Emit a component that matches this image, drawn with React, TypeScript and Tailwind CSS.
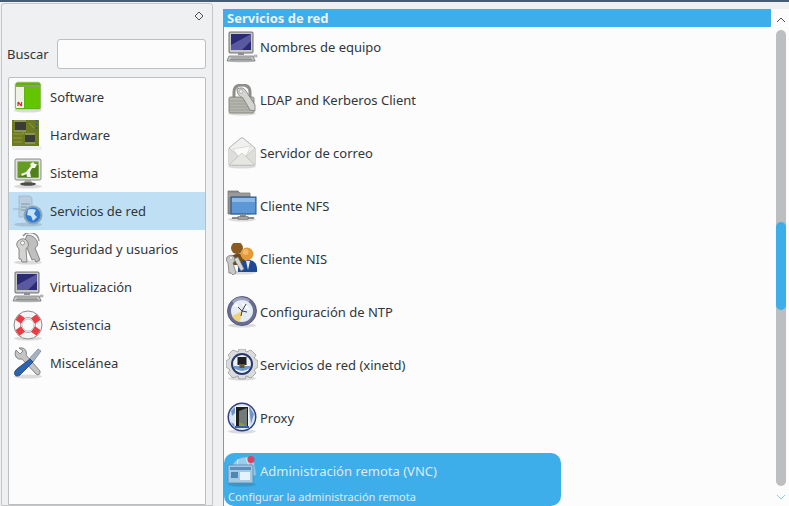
import type { ReactNode } from 'react'

function Icon({ children }: { children: ReactNode }) {
  return (
    <svg viewBox="0 0 32 32" className="w-8 h-8 shrink-0">
      <ellipse cx="16" cy="29.5" rx="14" ry="2" fill="#000" opacity="0.13" />
      {children}
    </svg>
  )
}

const SoftwareIcon = () => (
  <Icon>
    <path d="M3 3 L5 1 H27 L29 3 V27 Q29 28.500 27 28.500 H5 Q3 28.500 3 27 Z" fill="#5fb30c" stroke="#cfd6c6" strokeWidth="0.8" />
    <path d="M4 4 H28 V6 H4 Z" fill="#9a9a9a" opacity="0.7" />
    <path d="M4 6 H12 V27 H4 Z" fill="#eef3e6" />
    <path d="M13 6 H28 V27 H13 Z" fill="#64c400" />
    <path d="M6 21 V25 M6 21 L9.500 25 M9.500 21 V25" stroke="#e02a2a" strokeWidth="1.200" fill="none" />
  </Icon>
)

const HardwareIcon = () => (
  <svg viewBox="0 0 32 32" className="w-8 h-8 shrink-0">
    <rect x="0" y="1" width="27" height="26" fill="#6e7a22" />
    <rect x="0" y="27" width="30" height="4" fill="#ddd" opacity="0.4" />
    <rect x="3" y="3" width="11" height="8" fill="#3c3c36" />
    <path d="M3 3 V1 M5 3 V1 M7 3 V1 M9 3 V1 M11 3 V1 M13 3 V1 M3 11 V13 M5 11 V13 M7 11 V13 M9 11 V13 M11 11 V13 M13 11 V13" stroke="#c5c5b0" strokeWidth="0.7" />
    <rect x="13" y="16" width="10" height="7" fill="#3a3d34" />
    <path d="M14 16 V14 M16 16 V14 M18 16 V14 M20 16 V14 M22 16 V14 M14 23 V25 M16 23 V25 M18 23 V25 M20 23 V25 M22 23 V25" stroke="#c5c5b0" strokeWidth="0.7" />
    <path d="M24.500 1 V12" stroke="#2f5a9c" strokeWidth="1.600" strokeDasharray="2 1.500" />
    <path d="M17 4 L22 9 M1 15 H11 L12 13 M1 19 H10 M2 23 H10" stroke="#a8a93c" strokeWidth="0.7" fill="none" />
  </svg>
)

const SistemaIcon = () => (
  <Icon>
    <rect x="3" y="2" width="26" height="21" rx="1.500" fill="#dfe1dc" stroke="#6d6f6c" strokeWidth="0.8" />
    <rect x="5.500" y="4.500" width="21" height="16" fill="#659c22" />
    <path d="M5.500 20.500 L26.500 8 V20.500 Z" fill="#508018" />
    <path d="M9 17 L14 15 L19 9 L18 7 L21 5 L23 7 L25 7 L23 11 L20 11 L18 15 L19 20 H15 L14.500 17 L10 19 Z" fill="#f4f5ef" />
    <path d="M13 23 H19 L20 26 H12 Z" fill="#a5a7a4" />
    <ellipse cx="16" cy="27" rx="8" ry="1.800" fill="#4b4d4b" />
  </Icon>
)

const RedIcon = () => (
  <Icon>
    <path d="M7 1 H18 L20 3 V22 H7 Z" fill="#b8cbdb" stroke="#8da3b5" strokeWidth="0.6" opacity="0.85" />
    <path d="M9 9 H18 M9 12 H15 M9 15 H14" stroke="#7f98ad" strokeWidth="1" />
    <path d="M1 14 H9" stroke="#9eb3c4" strokeWidth="1" />
    <circle cx="21" cy="20" r="9.500" fill="#8ea5b8" />
    <circle cx="21" cy="20" r="7.500" fill="#2f7bd0" />
    <path d="M16 15 Q20 13 24 15 L22 19 L25 22 L21 26 L19 21 L15 20 Z" fill="#c9e1f6" />
  </Icon>
)

const KeysIcon = () => (
  <Icon>
    <path d="M11 3 A9 9 0 0 1 27 8" fill="none" stroke="#8e8f8c" strokeWidth="1.300" />
    <path d="M15 2 Q22 2 25 8 Q27 13 23 15 L28 27 L24 29 L22 26 L20 27 L15 15 Q11 10 15 2 Z" fill="#bfc0bd" stroke="#6f706e" strokeWidth="0.8" />
    <path d="M6 8 Q12 3 16 9 Q18 13 14 16 L15 29 L10 29 L9 26 H7 V16 Q3 12 6 8 Z" fill="#d3d4d1" stroke="#6f706e" strokeWidth="0.8" />
    <circle cx="10.500" cy="10" r="2" fill="#fff" stroke="#77787a" strokeWidth="0.7" />
  </Icon>
)

const ComputerIcon = () => (
  <Icon>
    <rect x="3" y="1" width="24" height="21" rx="1" fill="#c7c8c6" stroke="#4f5052" strokeWidth="0.8" />
    <rect x="5" y="3" width="20" height="16" fill="#2b2a78" />
    <path d="M5 19 V14 L25 3 V10 L16 19 Z" fill="#6f6cb2" opacity="0.7" />
    <path d="M12 22 H18 V24 H12 Z" fill="#8f908e" />
    <path d="M3 25 H27 L29 30 H1 Z" fill="#c5c6c4" stroke="#66676a" strokeWidth="0.7" />
    <path d="M5 27 H25 M4 28.500 H26" stroke="#77787a" strokeWidth="0.7" />
    <rect x="28" y="24" width="3" height="2" fill="#d0d1cf" stroke="#77787a" strokeWidth="0.4" />
  </Icon>
)

const LifebuoyIcon = () => (
  <Icon>
    <circle cx="16" cy="16" r="14" fill="#f4f4f4" stroke="#8c8c8c" strokeWidth="1" />
    <circle cx="16" cy="16" r="7.500" fill="#fbfbfb" stroke="#a8a8a8" strokeWidth="1" />
    <path d="M5.500 8 L11 12 M26.500 8 L21 12 M5.500 24 L11 20 M26.500 24 L21 20" stroke="#e83d42" strokeWidth="7" />
    <circle cx="16" cy="16" r="6" fill="#fbfbfb" stroke="#b9b9b9" strokeWidth="0.8" />
  </Icon>
)

const ToolsIcon = () => (
  <Icon>
    <path d="M4 3 L8 7 L11 4 L7 1 Q12 0 14 4 Q15 6 14 8 L28 24 Q29 27 26 28 L24 27 L10 12 Q6 13 4 10 Q2 7 4 3 Z" fill="#c4c5c3" stroke="#707173" strokeWidth="0.8" />
    <path d="M17 12 L26 2 L29 4 L21 15 Z" fill="#a6b3c2" stroke="#6d7c8e" strokeWidth="0.7" />
    <path d="M18 12 L21 15 L10 26 Q6 31 3 28 Q1 25 6 21 Z" fill="#2c63ac" stroke="#1c3f74" strokeWidth="0.8" />
  </Icon>
)

const LockIcon = () => (
  <Icon>
    <path d="M8 15 V8 Q8 1 16 1 Q24 1 24 8 V15" fill="none" stroke="#8d8f8a" strokeWidth="3" />
    <rect x="3" y="13" width="25" height="16" rx="1.500" fill="#b5b7ae" stroke="#76786f" strokeWidth="0.8" />
    <path d="M3 17 H28 M3 20 H28 M3 23 H28 M3 26 H28" stroke="#94968d" strokeWidth="0.7" />
    <path d="M11 5 Q17 2 20 7 L29 21 L29 27 L24 26 L17 14 Q11 12 11 5 Z" fill="#d4d5d1" stroke="#777" strokeWidth="0.8" />
    <circle cx="15" cy="7.500" r="1.800" fill="#f2f2f2" stroke="#888" strokeWidth="0.5" />
  </Icon>
)

const MailIcon = () => (
  <Icon>
    <path d="M3 11 L15 1 Q16 0.500 17 1 L29 11 V28 H3 Z" fill="#f0f0ee" stroke="#a9aaa7" strokeWidth="0.9" />
    <path d="M3 11 L12 19 L3 28 M29 11 L20 19 L29 28" fill="#dededb" stroke="#bcbdba" strokeWidth="0.7" />
    <path d="M7 12 L25 9 L20 19 H12 Z" fill="#fafafa" stroke="#cfd0cd" strokeWidth="0.7" />
    <path d="M3 28 L16 16 L29 28 Z" fill="#e6e6e3" stroke="#c0c1be" strokeWidth="0.6" />
  </Icon>
)

const NfsIcon = () => (
  <Icon>
    <path d="M2 1 H12 L14 3 H24 V24 H2 Z" fill="#8f8f8d" stroke="#6a6a68" strokeWidth="0.7" />
    <path d="M2 4 H24 M2 6 H24" stroke="#b7b7b5" strokeWidth="0.6" />
    <rect x="5" y="7" width="25" height="17" fill="#5d97d6" stroke="#234e83" strokeWidth="1" />
    <path d="M6 8 H29 V12 H6 Z" fill="#8dbbe8" />
    <rect x="14" y="24" width="6" height="3" fill="#8c8d8b" />
    <path d="M6 28 H28" stroke="#6a6b69" strokeWidth="1.500" />
    <rect x="12" y="26.500" width="10" height="3" fill="#a3a4a2" stroke="#616260" strokeWidth="0.5" />
  </Icon>
)

const NisIcon = () => (
  <Icon>
    <circle cx="11" cy="5" r="6" fill="#8a5a1e" />
    <path d="M4 14 Q11 8 19 12 V22 H4 Z" fill="#6f4a1c" />
    <path d="M12 29 Q11 17 22 17 Q32 17 31 29 Z" fill="#1e4a94" />
    <path d="M20 18 L22 27 L24 18 Z" fill="#e8e8e8" />
    <circle cx="21" cy="11" r="6.500" fill="#e39a37" />
    <circle cx="19.500" cy="9" r="3" fill="#f3b868" />
    <path d="M1 14 Q6 10 9 15 Q10 18 7 20 L10 30 L7 32 L5 30 L3 30 L2 20 Q-1 17 1 14 Z" fill="#c9cac7" stroke="#707170" strokeWidth="0.7" />
    <path d="M8 16 L12 14 L18 26 L15 28 Z" fill="#d6d7d4" stroke="#747573" strokeWidth="0.7" />
    <circle cx="5" cy="15" r="1.500" fill="#fff" stroke="#777" strokeWidth="0.4" />
  </Icon>
)

const ClockIcon = () => (
  <Icon>
    <circle cx="16" cy="15" r="14.500" fill="#6a6d92" stroke="#4a4c6c" strokeWidth="0.8" />
    <path d="M6 5 A14 14 0 0 1 24 4 L22 7 A11 11 0 0 0 8 8 Z" fill="#9ea1bb" />
    <circle cx="16" cy="15" r="11" fill="#e4ebf2" />
    <path d="M16 15 L6 20 Q8 25 14 26 Z" fill="#ecd27e" />
    <path d="M14 6 L20 9 L25 14 L20 13 Z M7 10 L11 7 L12 11 Z" fill="#fbfcfd" />
    <path d="M16 15 L20 8 M16 15 L12 11 M16 15 L15 20 M16 15 L21 16" stroke="#2c2e38" strokeWidth="0.9" fill="none" />
  </Icon>
)

const GearIcon = () => (
  <Icon>
    <path d="M13 0 H19 L20 3 L25 1 L30 6 L28 9 L32 12 V18 L28 21 L30 24 L25 29 L20 27 L19 30 H13 L12 27 L7 29 L2 24 L4 21 L0 18 V12 L4 9 L2 6 L7 1 L12 3 Z" fill="#d9dbdc" stroke="#8e9092" strokeWidth="0.7" />
    <circle cx="16" cy="15" r="11" fill="#29396b" />
    <circle cx="16" cy="15" r="9" fill="#eef2f6" />
    <path d="M8 19 Q16 25 24 19 V17 H8 Z" fill="#6c98cc" />
    <path d="M11.500 8 H20.500 V16 H18.500 V18.500 H13.500 V16 H11.500 Z" fill="#1d1f24" />
    <path d="M14 18 V15 M16 18 V15 M18 18 V15" stroke="#d4b640" strokeWidth="0.8" />
  </Icon>
)

const ProxyIcon = () => (
  <Icon>
    <circle cx="16" cy="15" r="14.500" fill="#2f3d83" />
    <circle cx="16" cy="15" r="13" fill="#dce6f1" />
    <path d="M5 9 L9 5 L10 10 L6 14 Z M23 4 L28 12 L25 22 L24 14 Z M5 20 L8 22 L9 26 Q6 24 5 20 Z" fill="#6f95c9" />
    <rect x="9" y="4" width="14" height="21" fill="#f3f5f2" />
    <rect x="10" y="5" width="12" height="19" fill="#1d1f1c" />
    <path d="M13 24 V9 L21 6 V24 Z" fill="#737b78" />
    <path d="M13 24 V20 L21 24 Z" fill="#8a9e2e" />
    <rect x="9" y="24" width="14" height="2" fill="#3561a9" />
  </Icon>
)

const VncIcon = () => (
  <Icon>
    <path d="M6 12 Q8 3 20 2 Q26 2 28 7 L30 20 L4 26 Z" fill="#a9d3ef" opacity="0.85" stroke="#7fb2d4" strokeWidth="0.6" />
    <path d="M12 4 Q10 14 16 16 M20 3 Q24 10 23 17" stroke="#dceef9" strokeWidth="1" fill="none" />
    <circle cx="25" cy="4.500" r="3.500" fill="#d9445f" />
    <path d="M25 8 L27 20" stroke="#c8859b" strokeWidth="0.8" />
    <rect x="2" y="10" width="25" height="18" rx="1.500" fill="#a5c9e3" stroke="#5e8bb0" strokeWidth="0.9" />
    <rect x="4" y="12" width="21" height="3" fill="#5c8fbb" />
    <rect x="5" y="17" width="7" height="6" fill="#4f86b4" />
    <rect x="14" y="17" width="10" height="8" fill="#e4f2fb" />
  </Icon>
)

const categories = [
  { label: 'Software', icon: <SoftwareIcon /> },
  { label: 'Hardware', icon: <HardwareIcon /> },
  { label: 'Sistema', icon: <SistemaIcon /> },
  { label: 'Servicios de red', icon: <RedIcon />, selected: true },
  { label: 'Seguridad y usuarios', icon: <KeysIcon /> },
  { label: 'Virtualización', icon: <ComputerIcon /> },
  { label: 'Asistencia', icon: <LifebuoyIcon /> },
  { label: 'Miscelánea', icon: <ToolsIcon /> },
]

const modules = [
  { label: 'Nombres de equipo', icon: <ComputerIcon /> },
  { label: 'LDAP and Kerberos Client', icon: <LockIcon /> },
  { label: 'Servidor de correo', icon: <MailIcon /> },
  { label: 'Cliente NFS', icon: <NfsIcon /> },
  { label: 'Cliente NIS', icon: <NisIcon /> },
  { label: 'Configuración de NTP', icon: <ClockIcon /> },
  { label: 'Servicios de red (xinetd)', icon: <GearIcon /> },
  { label: 'Proxy', icon: <ProxyIcon /> },
]

export default function App() {
  return (
    <div className="w-[789px] h-[506px] overflow-hidden flex flex-col bg-[#eff0f1] text-[13px] text-[#31363b] font-['Noto_Sans',sans-serif]">
      <div className="h-[2px] bg-[#475c70] shrink-0" />
      <div className="flex-1 flex min-h-0">
        {/* left panel */}
        <div className="w-[212px] ml-px mt-px shrink-0 border border-[#c4c6c8] rounded-t-[3px] flex flex-col px-[6px]">
          <div className="h-[35px] shrink-0 flex justify-end items-start pt-[7px] pr-[2px]">
            <svg viewBox="0 0 10 10" className="w-[10px] h-[10px]">
              <path d="M5 1 L9 5 L5 9 L1 5 Z" fill="none" stroke="#4d4d4d" strokeWidth="1" />
            </svg>
          </div>
          <div className="flex items-center h-[30px] shrink-0">
            <span className="w-[50px] -ml-px mt-[2px]">Buscar</span>
            <div className="flex-1 h-[30px] bg-[#fcfcfc] border border-[#bcbebf] rounded-[3px]" />
          </div>
          <div className="mt-2 flex-1 bg-[#fcfcfc] border border-[#bcbebf] rounded-t-[2px]">
            {categories.map((c) => (
              <div
                key={c.label}
                className={'h-[38px] flex items-center pl-[3px] gap-[6px] ' + (c.selected ? 'bg-[#bfdff4]' : '')}
              >
                {c.icon}
                <span className="mt-[2px]">{c.label}</span>
              </div>
            ))}
          </div>
        </div>

        {/* right panel */}
        <div className="ml-[10px] mt-[7px] flex-1 min-w-0 bg-[#fcfcfc] border-l border-[#3daee9] flex flex-col relative">
          <div className="h-[18px] shrink-0 mr-[18px] bg-[#3daee9] text-[#eff0f1] font-bold pl-[3px] leading-[18px]">
            Servicios de red
          </div>
          <div className="mt-[2px] flex-1 min-h-0 flex">
            <div className="flex-1 min-w-0 flex flex-col">
              {modules.map((m) => (
                <div key={m.label} className="h-[53px] shrink-0 flex items-start pl-[2px] gap-[2px]">
                  <div className="mt-[2px]">{m.icon}</div>
                  <span className="leading-[36px]">{m.label}</span>
                </div>
              ))}
              <div className="w-[337px] h-[53px] bg-[#3daee9] rounded-[10px] text-[#eff0f1] flex flex-col pl-[2px]">
                <div className="flex items-start gap-[2px] h-[37px]">
                  <div className="mt-[2px]">
                    <VncIcon />
                  </div>
                  <span className="leading-[36px] opacity-90">Administración remota (VNC)</span>
                </div>
                <span className="text-[11px] leading-[14px] opacity-90 ml-[2px]">Configurar la administración remota</span>
              </div>
            </div>
            <div className="w-[17px] shrink-0" />
          </div>
          {/* scrollbar */}
          <div className="absolute right-[3px] top-[3px] bottom-0 w-[10px] flex flex-col items-center">
            <svg viewBox="0 0 10 6" className="w-[10px] h-[6px] mt-[5px]">
              <path d="M1 5 L5 1 L9 5" fill="none" stroke="#4d4d4d" strokeWidth="1" />
            </svg>
            <div className="mt-[7px] w-[10px] h-[456px] rounded-[5px] bg-[#bcbec0] relative">
              <div className="absolute left-0 top-[192px] w-[10px] h-[88px] rounded-[5px] bg-[#3daee9]" />
            </div>
            <svg viewBox="0 0 10 6" className="w-[10px] h-[6px] mt-[8px]">
              <path d="M1 1 L5 5 L9 1" fill="none" stroke="#93cee9" strokeWidth="1" />
            </svg>
          </div>
        </div>
      </div>
    </div>
  )
}
